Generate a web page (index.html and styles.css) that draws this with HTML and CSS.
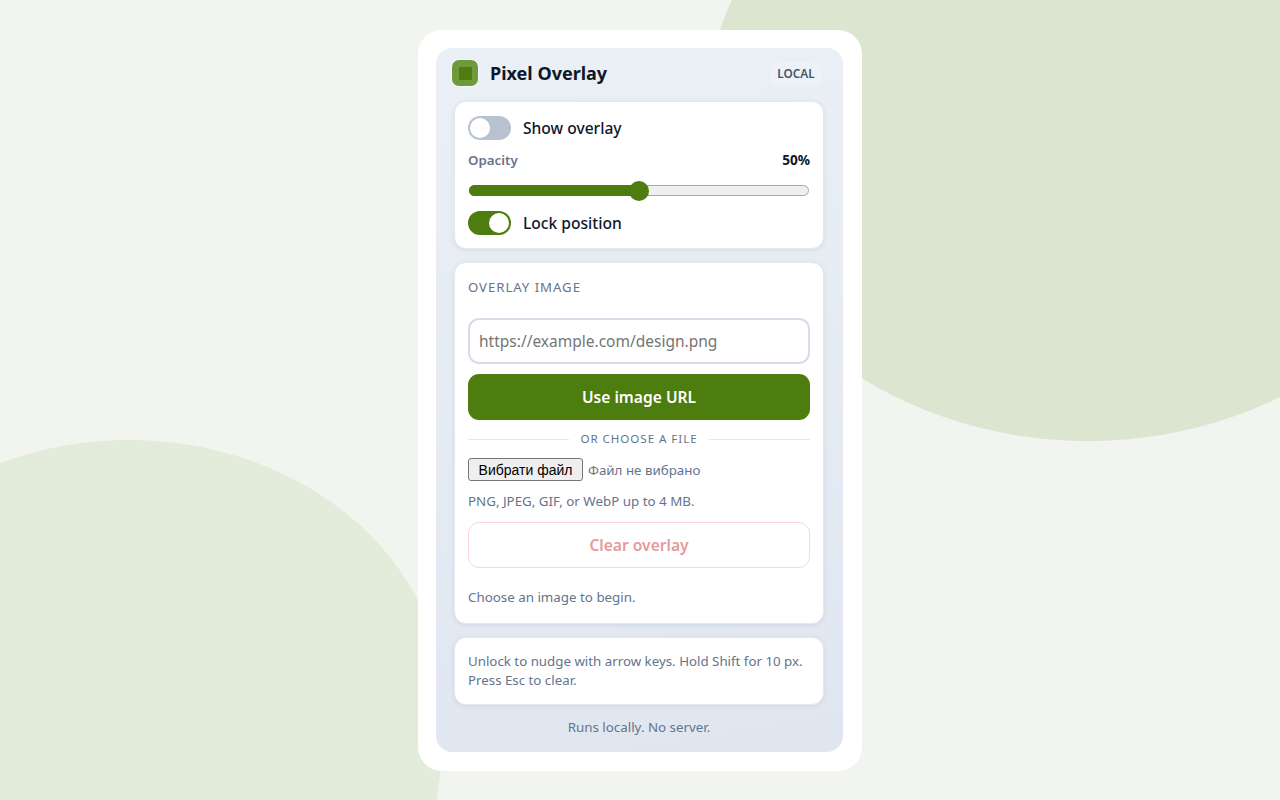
FILE: index.html
```html
<!DOCTYPE html>
<html lang="en">
  <head>
    <meta charset="UTF-8" />
    <title>Pixel Overlay</title>
    <link rel="stylesheet" href="styles.css">
  </head>
  <body>
    <div class="backdrop">
      <div class="blob blob-top"></div>
      <div class="blob blob-bottom"></div>
    </div>

    <div class="frame">
      <div class="panel">
        <div class="header">
          <div class="logo"><div class="logo-inner"></div></div>
          <h1>Pixel Overlay</h1>
          <span class="badge">LOCAL</span>
        </div>

        <div class="card controls">
          <label class="toggle-row">
            <span class="toggle"><span class="knob"></span></span>
            Show overlay
          </label>
          <div class="opacity-row">
            <span>Opacity</span>
            <strong>50%</strong>
          </div>
          <div class="slider">
            <div class="slider-fill"></div>
            <div class="slider-thumb"></div>
          </div>
          <label class="toggle-row">
            <span class="toggle on"><span class="knob"></span></span>
            Lock position
          </label>
        </div>

        <div class="card image-card">
          <div class="section-title">OVERLAY IMAGE</div>
          <input class="url-input" type="text" placeholder="https://example.com/design.png" />
          <button class="btn-primary">Use image URL</button>
          <div class="divider"><span>OR CHOOSE A FILE</span></div>
          <div class="file-row">
            <button class="file-btn">Вибрати файл</button>
            <span>Файл не вибрано</span>
          </div>
          <p class="hint">PNG, JPEG, GIF, or WebP up to 4 MB.</p>
          <button class="btn-clear">Clear overlay</button>
          <p class="status">Choose an image to begin.</p>
        </div>

        <div class="card help">
          Unlock to nudge with arrow keys. Hold Shift for 10 px.<br />
          Press Esc to clear.
        </div>

        <div class="footer">Runs locally. No server.</div>
      </div>
    </div>
  </body>
</html>
```

FILE: styles.css
```css
* {
  box-sizing: border-box;
}

html,
body {
  height: 100%;
}

body {
  margin: 0;
  background: #f2f5ef;
  font-family: "Noto Sans", sans-serif;
  color: #0f172a;
  overflow: hidden;
  display: flex;
  justify-content: center;
  align-items: flex-start;
  padding-top: 30px;
}

.backdrop {
  position: fixed;
  top: 0;
  left: 0;
  width: 100%;
  height: 100%;
  overflow: hidden;
}

.blob {
  position: absolute;
}

.blob-top {
  left: 706px;
  top: -207px;
  width: 764px;
  height: 648px;
  border-radius: 50%;
  background: #dbe5cf;
}

.blob-bottom {
  left: -186px;
  top: 440px;
  width: 630px;
  height: 700px;
  border-radius: 50% / 38% 38% 62% 62%;
  background: #e3ebda;
}

.frame {
  position: relative;
  width: 444px;
  height: 741px;
  padding: 18px 19px 19px 18px;
  background: #fff;
  border-radius: 24px;
}

.panel {
  height: 100%;
  padding: 0 19px 0 18px;
  border-radius: 16px;
  background: linear-gradient(170deg, #ebf0f6, #e0e6f0);
}

.header {
  height: 53px;
  padding-bottom: 3px;
  display: flex;
  align-items: center;
  gap: 12px;
}

.logo {
  width: 26px;
  height: 26px;
  margin-left: -2px;
  border-radius: 7px;
  background: #6f9a3c;
  box-shadow: 0 0 0 1px rgba(255, 255, 255, 0.5);
  display: grid;
  place-items: center;
}

.logo-inner {
  width: 13px;
  height: 13px;
  background: #4d7c0f;
}

h1 {
  margin: 0;
  flex: 1;
  font-size: 18px;
  font-weight: 700;
  line-height: 1;
}

.badge {
  width: 54px;
  margin-right: 1px;
  text-align: center;
  line-height: 23px;
  border-radius: 12px;
  background: #edf2f9;
  color: #475569;
  font-size: 11.8px;
  font-weight: 600;
}

.card {
  background: #fff;
  border-radius: 12px;
  border: 1px solid #e4e9f1;
  box-shadow: 0 1px 4px rgba(100, 116, 139, 0.15);
  padding: 13px;
  margin-bottom: 13px;
}

.controls {
  height: 148px;
}

.toggle-row {
  display: flex;
  align-items: center;
  gap: 12px;
  height: 26px;
  font-size: 15.6px;
  font-weight: 500;
}

.toggle {
  width: 43px;
  height: 24px;
  border-radius: 12px;
  background: #b8c2d0;
  padding: 2px;
  display: block;
}

.knob {
  display: block;
  width: 20px;
  height: 20px;
  border-radius: 50%;
  background: #fff;
}

.toggle.on {
  background: #4d7c0f;
  padding-left: 21px;
}

.opacity-row {
  display: flex;
  justify-content: space-between;
  margin-top: 10px;
  font-size: 13.3px;
  line-height: 18px;
  font-weight: 600;
  color: #64748b;
}

.opacity-row strong {
  color: #0f172a;
  font-weight: 700;
  font-size: 13.6px;
}

.slider {
  position: relative;
  height: 11px;
  margin: 16px 1px 14px;
  border: 1px solid #a8a8a8;
  border-radius: 6px;
  background: #efefef;
}

.slider-fill {
  position: absolute;
  left: -1px;
  top: -1px;
  bottom: -1px;
  width: 50%;
  background: #4d7c0f;
  border-radius: 6px 0 0 6px;
}

.slider-thumb {
  position: absolute;
  left: 50%;
  top: 50%;
  width: 20px;
  height: 20px;
  margin: -10px 0 0 -10px;
  border-radius: 50%;
  background: #4d7c0f;
}

.image-card {
  height: 362px;
}

.section-title {
  margin-top: 2px;
  font-size: 13.2px;
  line-height: 18px;
  letter-spacing: 0.95px;
  color: #64748b;
}

.url-input {
  display: block;
  width: 100%;
  height: 46px;
  margin-top: 22px;
  padding: 0 9px;
  border: 2px solid #d5dde9;
  border-radius: 11px;
  font-family: inherit;
  font-size: 15.5px;
  color: #0f172a;
  outline: none;
}

.url-input::placeholder {
  color: #757575;
}

.btn-primary,
.btn-clear {
  display: block;
  width: 100%;
  height: 46px;
  border-radius: 11px;
  font-family: inherit;
  font-size: 15.6px;
  font-weight: 600;
}

.btn-primary {
  margin-top: 10px;
  border: none;
  background: #4d7c0f;
  color: #fff;
}

.divider {
  display: flex;
  align-items: center;
  gap: 11px;
  margin-top: 10px;
  font-size: 11.6px;
  line-height: 18px;
  letter-spacing: 0.95px;
  color: #64748b;
}

.divider::before,
.divider::after {
  content: "";
  flex: 1;
  height: 1px;
  background: #e2e8f0;
}

.file-row {
  display: flex;
  align-items: center;
  gap: 5px;
  margin-top: 10px;
  font-size: 13.35px;
  color: #64748b;
}

.file-btn {
  height: 23px;
  width: 115px;
  padding: 0;
  border: 1px solid #767676;
  border-radius: 3px;
  background: #efefef;
  font-family: "Liberation Sans", sans-serif;
  font-size: 14px;
  color: #000;
}

.hint,
.status {
  margin: 0;
  font-size: 13.35px;
  line-height: 18px;
  color: #64748b;
}

.hint {
  margin-top: 11px;
}

.btn-clear {
  margin-top: 12px;
  border: 1px solid #fbd5d5;
  background: #fff;
  color: #e79a9a;
}

.status {
  margin-top: 20px;
}

.help {
  height: 68px;
  padding-top: 14px;
  font-size: 13.3px;
  line-height: 19px;
  color: #64748b;
}

.footer {
  margin-top: 1px;
  text-align: center;
  font-size: 13.35px;
  line-height: 18px;
  color: #64748b;
}
```
